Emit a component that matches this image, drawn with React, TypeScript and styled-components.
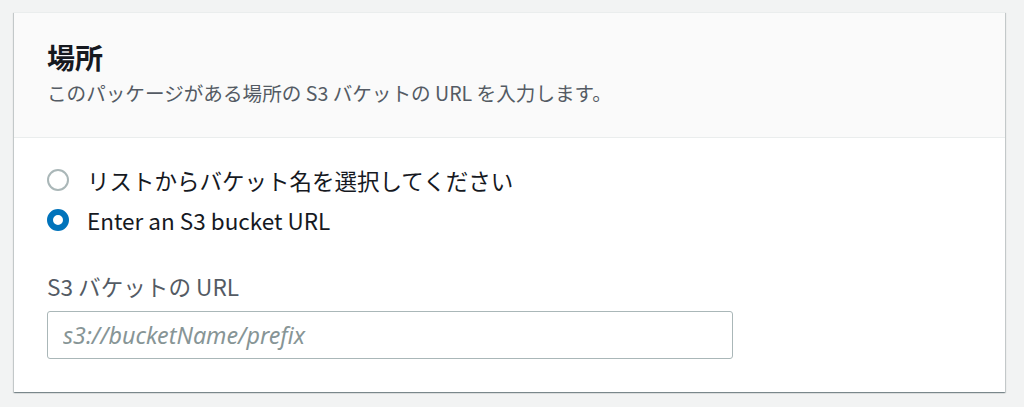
import React from "react";
import styled, { createGlobalStyle } from "styled-components";

const Global = createGlobalStyle`
  html, body { margin: 0; padding: 0; background: #f2f3f3; }
  body { font-family: "Noto Sans CJK JP", "Noto Sans", sans-serif; -webkit-font-smoothing: antialiased; }
`;

const Page = styled.div`
  padding: 12px 19px 15px 14px;
`;

const Card = styled.section`
  background: #fff;
  box-shadow: 0 1px 1px 0 rgba(0, 28, 36, 0.3), 1px 1px 1px 0 rgba(0, 28, 36, 0.15),
    -1px 1px 1px 0 rgba(0, 28, 36, 0.15);
  border-top: 1px solid #eaeded;
`;

const Header = styled.header`
  background: #fafafa;
  border-bottom: 1px solid #eaeded;
  padding: 25px 33px 25px;
  height: 125px;
  box-sizing: border-box;
`;

const Title = styled.h2`
  margin: 0;
  font-size: 28px;
  line-height: 38px;
  font-weight: 700;
  color: #16191f;
`;

const Description = styled.p`
  margin: 3px 0 0;
  font-size: 19.6px;
  line-height: 28px;
  color: #545b64;
`;

const Body = styled.div`
  padding: 27px 33px 33px;
  display: flex;
  flex-direction: column;
`;

const RadioGroup = styled.div`
  display: flex;
  flex-direction: column;
  gap: 10px;
`;

const RadioRow = styled.label`
  display: flex;
  align-items: center;
  gap: 18px;
  height: 30px;
  font-size: 22.5px;
  color: #16191f;
  cursor: pointer;
`;

const RadioDot = styled.span<{ $checked?: boolean }>`
  width: 22px;
  height: 22px;
  border-radius: 50%;
  box-sizing: border-box;
  flex: none;
  border: ${(p) => (p.$checked ? "6.5px solid #0073bb" : "2px solid #aab7b8")};
  background: #fff;
`;

const Field = styled.div`
  margin-top: 37px;
  display: flex;
  flex-direction: column;
  gap: 9px;
`;

const FieldLabel = styled.label`
  font-size: 22.6px;
  line-height: 30px;
  color: #545b64;
`;

const Input = styled.input`
  width: 686px;
  height: 48px;
  box-sizing: border-box;
  border: 1px solid #aab7b8;
  border-radius: 3px;
  padding: 0 15px;
  font-family: "Noto Sans", "Noto Sans CJK JP", sans-serif;
  font-size: 23.3px;
  color: #16191f;
  background: #fff;
  outline: none;
  &::placeholder {
    color: #879596;
    font-style: italic;
  }
`;

export default function App() {
  return (
    <>
      <Global />
      <Page>
        <Card>
          <Header>
            <Title>場所</Title>
            <Description>このパッケージがある場所の S3 バケットの URL を入力します。</Description>
          </Header>
          <Body>
            <RadioGroup>
              <RadioRow>
                <RadioDot />
                リストからバケット名を選択してください
              </RadioRow>
              <RadioRow>
                <RadioDot $checked />
                Enter an S3 bucket URL
              </RadioRow>
            </RadioGroup>
            <Field>
              <FieldLabel>S3 バケットの URL</FieldLabel>
              <Input placeholder="s3://bucketName/prefix" />
            </Field>
          </Body>
        </Card>
      </Page>
    </>
  );
}
